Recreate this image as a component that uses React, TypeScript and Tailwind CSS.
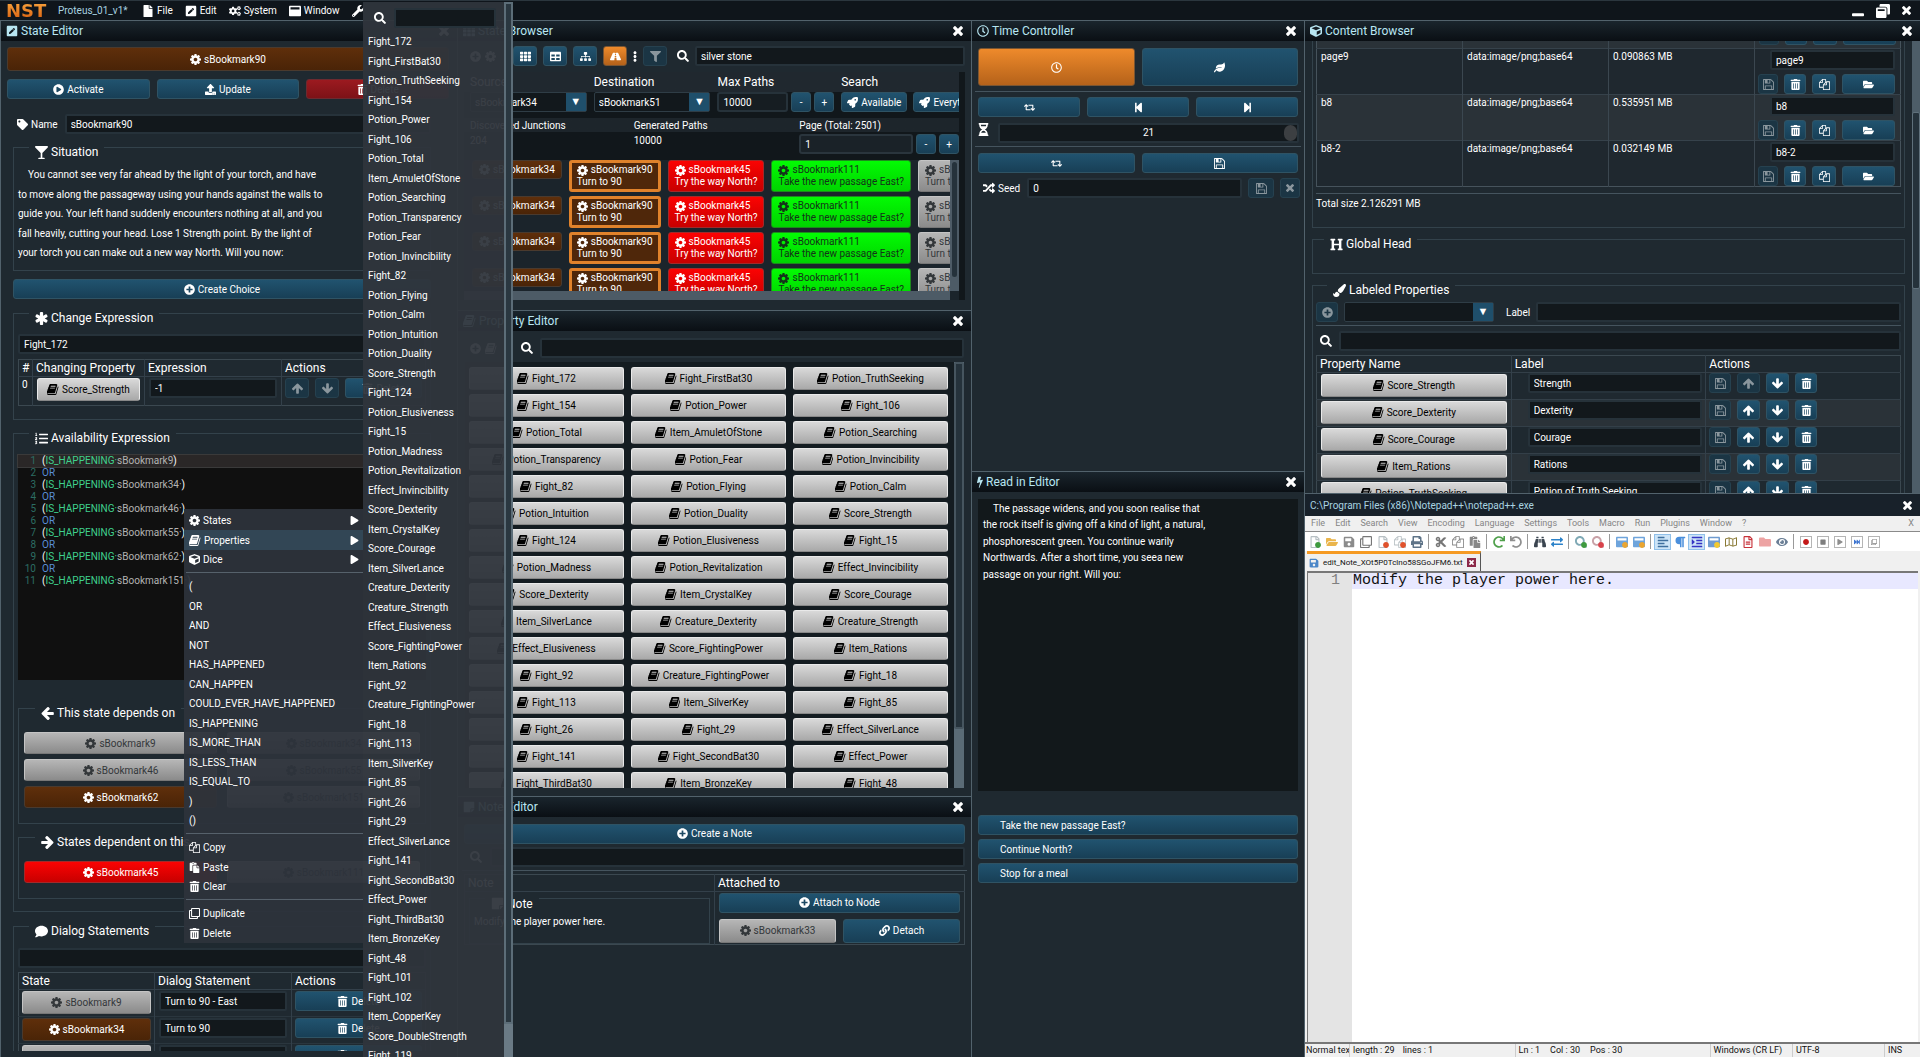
import type { ComponentType, ReactNode } from 'react'
import clsx from 'clsx'
import {
  FaAlignLeft,
  FaBinoculars,
  FaCircle,
  FaCogs,
  FaComment,
  FaCube,
  FaCut,
  FaEllipsisV,
  FaExchangeAlt,
  FaEye,
  FaFastForward,
  FaFile,
  FaFilter,
  FaFolder,
  FaFolderOpen,
  FaGlassMartini,
  FaHeading,
  FaHourglassHalf,
  FaIndent,
  FaLeaf,
  FaLink,
  FaListOl,
  FaPaintBrush,
  FaParagraph,
  FaPaste,
  FaPenSquare,
  FaPlay,
  FaPlayCircle,
  FaPlusCircle,
  FaPrint,
  FaRandom,
  FaRedo,
  FaRegClock,
  FaRegClone,
  FaRegFile,
  FaRegFileAlt,
  FaRegMap,
  FaRetweet,
  FaRoad,
  FaRocket,
  FaSave,
  FaSearch,
  FaSitemap,
  FaStepBackward,
  FaStepForward,
  FaStickyNote,
  FaStop,
  FaTable,
  FaTag,
  FaTh,
  FaTrashAlt,
  FaUndo,
  FaUpload,
  FaWindowMaximize,
  FaWindowMinimize,
  FaWindowRestore,
  FaWrench,
} from 'react-icons/fa'

type IconType = ComponentType<{ className?: string }>

function Glyph({ d, box = '128 128 1536 1536', className }: { d: string; box?: string; className?: string }) {
  return (
    <svg viewBox={box} className={className} height="1em" fill="currentColor" aria-hidden="true">
      <path d={d} />
    </svg>
  )
}

const Book: IconType = ({ className }) => (
  <Glyph
    className={className}
    box="64 128 1664 1536"
    d="M1639 478q40 57 18 129l-275 906q-19 64-76.5 107.5t-122.5 43.5h-923q-77 0-148.5-53.5t-99.5-131.5q-24-67-2-127 0-4 3-27t4-37q1-8-3-21.5t-3-19.5q2-11 8-21t16.5-23.5 16.5-23.5q23-38 45-91.5t30-91.5q3-10 .5-30t-.5-28q3-11 17-28t17-23q21-36 42-92t25-90q1-9-2.5-32t.5-28q4-13 22-30.5t22-22.5q19-26 42.5-84.5t27.5-96.5q1-8-3-25.5t-2-26.5q2-8 9-18t18-23 17-21q8-12 16.5-30.5t15-35 16-36 19.5-32 26.5-23.5 36-11.5 47.5 5.5l-1 3q38-9 51-9h761q74 0 114 56t18 130l-274 906q-36 119-71.5 153.5t-128.5 34.5h-869q-27 0-38 15-11 16-1 43 24 70 144 70h923q29 0 56-15.5t35-41.5l300-987q7-22 5-57 38 15 59 43zm-1064 2q-4 13 2 22.5t20 9.5h608q13 0 25.5-9.5t16.5-22.5l21-64q4-13-2-22.5t-20-9.5h-608q-13 0-25.5 9.5t-16.5 22.5zm-83 256q-4 13 2 22.5t20 9.5h608q13 0 25.5-9.5t16.5-22.5l21-64q4-13-2-22.5t-20-9.5h-608q-13 0-25.5 9.5t-16.5 22.5z"
  />
)

const Cog: IconType = ({ className }) => (
  <Glyph
    className={className}
    d="M1152 896q0-106-75-181t-181-75-181 75-75 181 75 181 181 75 181-75 75-181zm512-109v222q0 12-8 23t-20 13l-185 28q-19 54-39 91 35 50 107 138 10 12 10 25t-9 23q-27 37-99 108t-94 71q-12 0-26-9l-138-108q-44 23-91 38-16 136-29 186-7 28-36 28h-222q-14 0-24.5-8.5t-11.5-21.5l-28-184q-49-16-90-37l-141 107q-10 9-25 9-14 0-25-11-126-114-165-168-7-10-7-23 0-12 8-23 15-21 51-66.5t54-70.5q-27-50-41-99l-183-27q-13-2-21-12.5t-8-23.5v-222q0-12 8-23t19-13l186-28q14-46 39-92-40-57-107-138-10-12-10-24 0-10 9-23 26-36 98.5-107.5t94.5-71.5q13 0 26 10l138 107q44-23 91-38 16-136 29-186 7-28 36-28h222q14 0 24.5 8.5t11.5 21.5l28 184q49 16 90 37l142-107q9-9 24-9 13 0 25 10 129 119 165 170 7 8 7 22 0 12-8 23-15 21-51 66.5t-54 70.5q26 50 41 98l183 28q13 2 21 12.5t8 23.5z"
  />
)

const Files: IconType = ({ className }) => (
  <Glyph
    className={className}
    box="0 0 1792 1792"
    d="M1696 384q40 0 68 28t28 68v1216q0 40-28 68t-68 28h-960q-40 0-68-28t-28-68v-288h-544q-40 0-68-28t-28-68v-672q0-40 20-88t48-76l408-408q28-28 76-48t88-20h416q40 0 68 28t28 68v328q68-40 128-40h416zm-544 213l-299 299h299v-299zm-640-384l-299 299h299v-299zm196 647l316-316v-416h-384v416q0 40-28 68t-68 28h-416v640h512v-256q0-40 20-88t48-76zm956 804v-1152h-384v416q0 40-28 68t-68 28h-416v640h896z"
  />
)

const Floppy: IconType = ({ className }) => (
  <Glyph
    className={className}
    d="M512 1536h768v-384h-768v384zm896 0h128v-896q0-14-10-38.5t-20-34.5l-281-281q-10-10-34-20t-39-10v416q0 40-28 68t-68 28h-576q-40 0-68-28t-28-68v-416h-128v1280h128v-416q0-40 28-68t68-28h832q40 0 68 28t28 68v416zm-384-928v-320q0-13-9.5-22.5t-22.5-9.5h-192q-13 0-22.5 9.5t-9.5 22.5v320q0 13 9.5 22.5t22.5 9.5h192q13 0 22.5-9.5t9.5-22.5zm640 32v928q0 40-28 68t-68 28h-1344q-40 0-68-28t-28-68v-1344q0-40 28-68t68-28h928q40 0 88 20t76 48l280 280q28 28 48 76t20 88z"
  />
)

const Cross: IconType = ({ className }) => (
  <Glyph
    className={className}
    box="302 366 1188 1188"
    d="M1490 1322q0 40-28 68l-136 136q-28 28-68 28t-68-28l-294-294-294 294q-28 28-68 28t-68-28l-136-136q-28-28-28-68t28-68l294-294-294-294q-28-28-28-68t28-68l136-136q28-28 68-28t68 28l294 294 294-294q28-28 68-28t68 28l136 136q28 28 28 68t-28 68l-294 294 294 294q28 28 28 68z"
  />
)

const Asterisk: IconType = ({ className }) => (
  <Glyph
    className={className}
    d="M1546 1050q46 26 59.5 77.5t-12.5 97.5l-64 110q-26 46-77.5 59.5t-97.5-12.5l-266-153v307q0 52-38 90t-90 38h-128q-52 0-90-38t-38-90v-307l-266 153q-46 26-97.5 12.5t-77.5-59.5l-64-110q-26-46-12.5-97.5t59.5-77.5l266-154-266-154q-46-26-59.5-77.5t12.5-97.5l64-110q26-46 77.5-59.5t97.5 12.5l266 153v-307q0-52 38-90t90-38h128q52 0 90 38t38 90v307l266-153q46-26 97.5-12.5t77.5 59.5l64 110q26 46 12.5 97.5t-59.5 77.5l-266 154z"
  />
)

const Bolt: IconType = ({ className }) => (
  <Glyph
    className={className}
    box="448 0 896 1792"
    d="M1333 566q18 20 7 44l-540 1157q-13 25-42 25-4 0-14-2-17-4-25.5-19t-4.5-32l197-808-406 101q-4 1-12 1-18 0-31-11-18-15-13-39l201-825q4-14 16-23t28-9h328q19 0 32 12.5t13 29.5q0 8-5 18l-171 463 396-98q8-2 12-2 19 0 34 15z"
  />
)

const ArrowUp: IconType = ({ className }) => (
  <Glyph
    className={className}
    box="117 128 1558 1558"
    d="M1675 971q0 51-37 90l-75 75q-38 38-91 38-54 0-90-38l-294-293v704q0 52-37.5 84.5t-90.5 32.5h-128q-53 0-90.5-32.5t-37.5-84.5v-704l-294 293q-36 38-90 38t-90-38l-75-75q-38-38-38-90 0-53 38-91l651-651q35-37 90-37 54 0 91 37l651 651q37 39 37 91z"
  />
)

const ArrowDown: IconType = ({ className }) => <ArrowUp className={clsx('rotate-180', className)} />
const ArrowLeft: IconType = ({ className }) => <ArrowUp className={clsx('-rotate-90', className)} />
const ArrowRight: IconType = ({ className }) => <ArrowUp className={clsx('rotate-90', className)} />

const tones = {
  blue: 'border-[#2f5364] bg-linear-to-b from-[#21536f] to-[#183f56] text-white',
  faded: 'border-[#26414f] bg-[#1b3544] text-[#8a969d]',
  brown: 'border-[#4a3a2e] bg-linear-to-b from-[#5f2f0b] to-[#4a2407] text-white',
  red: 'border-[#a32a2a] bg-linear-to-b from-[#fb0303] to-[#c80000] text-white',
  crimson: 'border-[#6d2a30] bg-linear-to-b from-[#9c1a20] to-[#7d1217] text-white',
  green: 'border-[#1d8a1d] bg-linear-to-b from-[#03fb03] to-[#00d400] text-[#14331a]',
  orange: 'border-[#7a5532] bg-linear-to-b from-[#ee8a2b] to-[#b5621a] text-white',
  light: 'border-[#e9e9e9] border-b-[#888] bg-linear-to-b from-[#d9d9d9] to-[#a9a9a9] text-black',
  grey: 'border-[#c4c4c4] border-b-[#777] bg-linear-to-b from-[#b6b6b6] to-[#8b8b8b] text-[#33373a]',
}

type Tone = keyof typeof tones

function Btn({
  tone = 'blue',
  icon: Icon,
  label,
  className = 'h-5',
  children,
}: {
  tone?: Tone
  icon?: IconType
  label?: string
  className?: string
  children?: ReactNode
}) {
  return (
    <button
      type="button"
      aria-label={label}
      className={clsx(
        'flex min-w-0 items-center justify-center gap-[3px] overflow-hidden rounded-[3px] border whitespace-nowrap',
        tones[tone],
        className,
      )}
    >
      {Icon && <Icon className="shrink-0 text-[11px]" />}
      {children}
    </button>
  )
}

function Field({ label, value = '', className }: { label: string; value?: string; className?: string }) {
  return (
    <input
      aria-label={label}
      defaultValue={value}
      className={clsx('h-5 min-w-0 rounded-[2px] border-2 border-[#26323a] bg-[#12181c] px-1 outline-none', className)}
    />
  )
}

function Dropdown({ label, value = '', className }: { label: string; value?: string; className?: string }) {
  return (
    <span className={clsx('flex h-5 min-w-0 rounded-[2px] border border-[#2f3d46] bg-[#12181c]', className)}>
      <select aria-label={label} className="min-w-0 flex-1 appearance-none px-1 outline-none">
        <option>{value}</option>
      </select>
      <span aria-hidden="true" className="flex w-5 items-center justify-center bg-[#1f4f6b] text-[11px]">
        ▼
      </span>
    </span>
  )
}

function Group({
  title,
  icon: Icon,
  className,
  children,
}: {
  title: string
  icon: IconType
  className?: string
  children?: ReactNode
}) {
  return (
    <fieldset className={clsx('min-w-0 border border-[#33424b]', className)}>
      <legend className="ml-[11px] flex items-center gap-[3px] px-1.5 pt-2.5 text-[12px] leading-4">
        <Icon className="text-[13px]" />
        {title}
      </legend>
      {children}
    </fieldset>
  )
}

function Panel({
  title,
  icon: Icon,
  className,
  children,
}: {
  title: string
  icon: IconType
  className?: string
  children?: ReactNode
}) {
  return (
    <section className={clsx('flex min-h-0 min-w-0 flex-col overflow-hidden border-t border-l border-[#52626c] bg-[#1f2930]', className)}>
      <header className="flex h-5 shrink-0 items-center gap-[3px] bg-linear-to-b from-[#1a252d] to-[#0a0f14] px-[5px] text-[#b8e6f2]">
        <Icon className="text-[12px]" />
        <h2 className="flex-1 text-[12px]">{title}</h2>
        <button type="button" aria-label="Close" className="pr-[3px] text-white">
          <Cross className="text-[10px]" />
        </button>
      </header>
      {children}
    </section>
  )
}

const properties = [
  'Fight_172', 'Fight_FirstBat30', 'Potion_TruthSeeking', 'Fight_154', 'Potion_Power', 'Fight_106',
  'Potion_Total', 'Item_AmuletOfStone', 'Potion_Searching', 'Potion_Transparency', 'Potion_Fear',
  'Potion_Invincibility', 'Fight_82', 'Potion_Flying', 'Potion_Calm', 'Potion_Intuition', 'Potion_Duality',
  'Score_Strength', 'Fight_124', 'Potion_Elusiveness', 'Fight_15', 'Potion_Madness', 'Potion_Revitalization',
  'Effect_Invincibility', 'Score_Dexterity', 'Item_CrystalKey', 'Score_Courage', 'Item_SilverLance',
  'Creature_Dexterity', 'Creature_Strength', 'Effect_Elusiveness', 'Score_FightingPower', 'Item_Rations',
  'Fight_92', 'Creature_FightingPower', 'Fight_18', 'Fight_113', 'Item_SilverKey', 'Fight_85', 'Fight_26',
  'Fight_29', 'Effect_SilverLance', 'Fight_141', 'Fight_SecondBat30', 'Effect_Power', 'Fight_ThirdBat30',
  'Item_BronzeKey', 'Fight_48', 'Fight_101', 'Fight_102', 'Item_CopperKey', 'Score_DoubleStrength', 'Fight_119',
]

const situation = [
  'You cannot see very far ahead by the light of your torch, and have',
  'to move along the passageway using your hands against the walls to',
  'guide you. Your left hand suddenly encounters nothing at all, and you',
  'fall heavily, cutting your head. Lose 1 Strength point. By the light of',
  'your torch you can make out a new way North. Will you now:',
]

const expression = ['9', 'OR', '34', 'OR', '46', 'OR', '55', 'OR', '62', 'OR', '151']

function MenuBar() {
  const items: [string, IconType][] = [
    ['File', FaFile],
    ['Edit', FaPenSquare],
    ['System', FaCogs],
    ['Window', FaWindowMaximize],
  ]
  return (
    <header className="flex h-5 shrink-0 items-center border-t border-[#2b363e] bg-[#0f151b] px-1.5">
      <span className="w-[52px] bg-linear-to-b from-[#f7a03a] to-[#d9620f] bg-clip-text font-['DejaVu_Sans'] text-[18px] leading-4 font-bold text-transparent">
        NST
      </span>
      <span className="w-[84px] text-[#a9d3e0]">Proteus_01_v1*</span>
      <nav className="flex flex-1 items-center gap-3">
        {items.map(([name, Icon]) => (
          <button type="button" key={name} className="flex items-center gap-[3px]">
            <Icon className="text-[12px]" />
            {name}
          </button>
        ))}
        <button type="button" aria-label="Tools">
          <FaWrench className="text-[12px]" />
        </button>
      </nav>
      <div className="flex items-center gap-3 text-[12px]">
        <button type="button" aria-label="Minimize">
          <FaWindowMinimize />
        </button>
        <button type="button" aria-label="Restore">
          <FaWindowRestore className="text-[14px]" />
        </button>
        <button type="button" aria-label="Exit" className="pr-[3px]">
          <Cross className="text-[9px]" />
        </button>
      </div>
    </header>
  )
}

function StateEditor() {
  return (
    <Panel title="State Editor" icon={FaPenSquare} className="pb-1.5">
      <div className="min-h-0 flex-1 overflow-hidden pt-1.5 pr-2 pl-1.5">
        <Btn tone="brown" icon={Cog} className="h-6 w-full">
          sBookmark90
        </Btn>
        <div className="mt-2 grid grid-cols-3 gap-[7px]">
          <Btn icon={FaPlayCircle}>Activate</Btn>
          <Btn icon={FaUpload}>Update</Btn>
          <Btn tone="crimson" icon={FaTrashAlt}>
            Delete
          </Btn>
        </div>

        <div className="mt-[15px] pr-[18px] pl-1.5">
          <label className="flex items-center gap-[3px] pl-1">
            <FaTag className="text-[11px]" />
            Name
            <Field label="Name" value="sBookmark90" className="ml-1 flex-1" />
          </label>

          <Group title="Situation" icon={FaGlassMartini} className="h-[137px] px-1 pt-[5px]">
            {situation.map((line) => (
              <p key={line} className="whitespace-nowrap first-of-type:indent-2.5 odd:h-[19px] odd:leading-[19px] even:h-5 even:leading-5">
                {line}
              </p>
            ))}
          </Group>
          <Btn icon={FaPlusCircle} className="mt-2 mb-px h-5 w-full">
            Create Choice
          </Btn>

          <Group title="Change Expression" icon={Asterisk} className="px-1 pt-2 pb-[13px]">
            <Field label="Change expression" value="Fight_172" className="w-full" />
            <table className="mt-[5px] w-full table-fixed border border-[#3b4850] text-left">
              <thead className="text-[12px]">
                <tr className="h-[17px] border-b border-[#33404a]">
                  <th className="w-[14px] border-r border-[#33404a] pl-[3px] leading-4 font-normal">#</th>
                  <th className="w-28 border-r border-[#33404a] pl-[3px] leading-4 font-normal">Changing Property</th>
                  <th className="w-[137px] border-r border-[#33404a] pl-[3px] leading-4 font-normal">Expression</th>
                  <th className="pl-[3px] leading-4 font-normal">Actions</th>
                </tr>
              </thead>
              <tbody className="align-top">
                <tr className="h-[29px]">
                  <td className="border-r border-[#33404a] pl-[3px]">0</td>
                  <td className="border-r border-[#33404a] px-1 pt-px">
                    <Btn tone="light" icon={Book} className="h-[23px] w-full">
                      Score_Strength
                    </Btn>
                  </td>
                  <td className="border-r border-[#33404a] px-1 pt-px">
                    <Field label="Expression" value="-1" className="w-full" />
                  </td>
                  <td className="px-[3px] pt-px">
                    <div className="flex gap-1.5">
                      <Btn tone="faded" icon={ArrowUp} label="Move up" className="h-5 w-6 shrink-0" />
                      <Btn tone="faded" icon={ArrowDown} label="Move down" className="h-5 w-6 shrink-0" />
                      <Btn icon={FaTrashAlt} className="h-5 flex-1">
                        Delete
                      </Btn>
                    </div>
                  </td>
                </tr>
              </tbody>
            </table>
          </Group>

          <Group title="Availability Expression" icon={FaListOl} className="px-1 pt-2 pb-3">
            <ol className="h-[226px] bg-[#101010] pt-px">
              {expression.map((part, i) => (
                <li key={i} className="flex h-3 gap-1.5 leading-3 first:bg-[#2a2727] first:outline first:outline-[#3a3a3a]">
                  <span className="w-[18px] text-right text-[#2c6d63]">{i + 1}</span>
                  {part === 'OR' ? (
                    <span className="text-[#5a8fd6]">OR</span>
                  ) : (
                    <code className="font-['Roboto'] text-[#b3b3b3]">
                      <span className="text-white">(</span>
                      <span className="text-[#3fd18d]">IS_HAPPENING·</span>
                      sBookmark{part}
                      {part !== '9' && '·'}
                      <span className="text-white">)</span>
                    </code>
                  )}
                </li>
              ))}
            </ol>
            <Group title="This state depends on" icon={ArrowLeft} className="mt-[15px] px-[5px] pt-[11px] pb-[15px]">
              <div className="grid grid-cols-2 gap-x-2.5 gap-y-[5px]">
                <Btn tone="grey" icon={Cog} className="h-[22px]">sBookmark9</Btn>
                <Btn tone="grey" icon={Cog} className="h-[22px]">sBookmark34</Btn>
                <Btn tone="grey" icon={Cog} className="h-[22px]">sBookmark46</Btn>
                <Btn tone="grey" icon={Cog} className="h-[22px]">sBookmark55</Btn>
                <Btn tone="brown" icon={Cog} className="h-[22px]">sBookmark62</Btn>
                <Btn tone="grey" icon={Cog} className="h-[22px]">sBookmark151</Btn>
              </div>
            </Group>
            <Group title="States dependent on this" icon={ArrowRight} className="px-[5px] pt-[11px] pb-[15px]">
              <div className="grid grid-cols-2 gap-x-2.5">
                <Btn tone="red" icon={Cog} className="h-[22px]">sBookmark45</Btn>
                <Btn tone="grey" icon={Cog} className="h-[22px]">sBookmark111</Btn>
              </div>
            </Group>
          </Group>

          <Group title="Dialog Statements" icon={FaComment} className="mt-px px-1 pt-[9px]">
            <Field label="Filter dialog statements" className="w-full" />
            <table className="mt-1 w-full table-fixed border border-[#3b4850] text-left">
              <thead className="text-[12px]">
                <tr className="h-[17px] border-b border-[#33404a]">
                  <th className="w-[136px] border-r border-[#33404a] pl-[3px] leading-4 font-normal">State</th>
                  <th className="w-[137px] border-r border-[#33404a] pl-[3px] leading-4 font-normal">Dialog Statement</th>
                  <th className="pl-[3px] leading-4 font-normal">Actions</th>
                </tr>
              </thead>
              <tbody className="align-top">
                {[
                  ['sBookmark9', 'Turn to 90 - East'],
                  ['sBookmark34', 'Turn to 90'],
                  ['sBookmark46', ''],
                ].map(([state, text], i) => (
                  <tr key={state} className="h-[27px] border-b border-[#2a363e]">
                    <td className="border-r border-[#33404a] px-[3px] pt-px">
                      <Btn tone={i === 1 ? 'brown' : 'grey'} icon={Cog} className="h-[23px] w-full">
                        {state}
                      </Btn>
                    </td>
                    <td className="border-r border-[#33404a] px-1 pt-px">
                      <Field label={`Statement for ${state}`} value={text} className="w-full" />
                    </td>
                    <td className="px-[3px] pt-px">
                      <Btn icon={FaTrashAlt} className="h-5 w-full">
                        Delete
                      </Btn>
                    </td>
                  </tr>
                ))}
              </tbody>
            </table>
          </Group>
        </div>
      </div>
    </Panel>
  )
}

function StateBrowser() {
  return (
    <Panel title="State Browser" icon={FaTh} className="flex-[290]">
      <div className="flex min-h-0 flex-1 flex-col px-1.5 pt-[5px] pb-2.5">
        <div className="flex items-center gap-1.5">
          <span className="flex w-[43px] gap-1 pl-1.5 text-[11px]">
            <FaPlusCircle />
            <Cog />
          </span>
          <Btn icon={FaTh} label="Grid" className="h-5 w-6" />
          <Btn icon={FaTable} label="Table" className="h-5 w-6" />
          <Btn icon={FaSitemap} label="Tree" className="h-5 w-6" />
          <Btn tone="orange" icon={FaRoad} label="Paths" className="h-5 w-6" />
          <FaEllipsisV className="w-1 text-[11px]" />
          <Btn tone="faded" icon={FaFilter} label="Filter" className="h-5 w-6" />
          <FaSearch className="ml-1 text-[12px]" />
          <Field label="Search states" value="silver stone" className="flex-1" />
        </div>

        <div className="mt-1.5 flex min-h-0 flex-1 flex-col overflow-hidden bg-[#11171b] pr-1.5">
          <div className="grid h-10 shrink-0 grid-cols-[124fr_124fr_124fr_118fr] bg-linear-to-b from-[#20282f] from-50% to-[#11171b] to-50% pl-1.5 text-[12px]">
            <label className="min-w-0">
              <span className="block h-5 leading-5">Source</span>
              <Dropdown label="Source" value="sBookmark34" className="mr-[7px] text-[10px]" />
            </label>
            <label className="min-w-0">
              <span className="block h-5 leading-5">Destination</span>
              <Dropdown label="Destination" value="sBookmark51" className="mr-[7px] text-[10px]" />
            </label>
            <div className="min-w-0">
              <label htmlFor="max-paths" className="block h-5 leading-5">
                Max Paths
              </label>
              <div className="flex gap-[3px] pr-[7px] text-[10px]">
                <input id="max-paths" defaultValue="10000" className="h-5 min-w-0 flex-1 rounded-[3px] border-2 border-[#26323a] bg-[#161d22] px-1" />
                <Btn className="h-5 w-5">-</Btn>
                <Btn className="h-5 w-5">+</Btn>
              </div>
            </div>
            <div className="min-w-0 overflow-hidden">
              <span className="block h-5 leading-5">Search</span>
              <div className="flex gap-1.5 text-[10px]">
                <Btn icon={FaRocket} className="h-5 shrink-0 px-[5px]">Available</Btn>
                <Btn icon={FaRocket} className="h-5 shrink-0 px-[5px]">Everything</Btn>
              </div>
            </div>
          </div>

          <div className="mt-1.5 grid h-10 shrink-0 grid-cols-[164fr_166fr_160fr] bg-linear-to-b from-[#1d252b] from-35% to-[#11171b] to-35% pl-1.5">
            <div className="min-w-0">
              <p className="h-[15px] leading-[15px]">Discovered Junctions</p>
              <p className="leading-4">204</p>
            </div>
            <div className="min-w-0">
              <p className="h-[15px] leading-[15px]">Generated Paths</p>
              <p className="leading-4">10000</p>
            </div>
            <div className="min-w-0">
              <label htmlFor="page" className="block h-4 leading-[15px]">
                Page (Total: 2501)
              </label>
              <div className="flex gap-[3px]">
                <input id="page" defaultValue="1" className="h-5 min-w-0 flex-1 rounded-[3px] border-2 border-[#2a353d] bg-[#1a2228] px-1" />
                <Btn className="h-5 w-5">-</Btn>
                <Btn className="h-5 w-5">+</Btn>
              </div>
            </div>
          </div>

          <div className="mt-0.5 flex min-h-0 flex-1 bg-[#1b242b]">
            <div className="flex min-w-0 flex-1 flex-col">
              <div className="min-h-0 flex-1 space-y-1 overflow-hidden pl-2">
                {[0, 1, 2, 3].map((i) => (
                  <div key={i} className="flex h-8 items-start gap-[7px]">
                    <Btn tone="brown" icon={Cog} className="h-[19px] shrink-0 px-1.5">
                      sBookmark34
                    </Btn>
                    <Chip name="sBookmark90" text="Turn to 90" className="border-[3px] border-[#e0822b] bg-[#4f270a] px-[5px] text-white" />
                    <Chip name="sBookmark45" text="Try the way North?" className={clsx('border px-1.5', tones.red)} />
                    <Chip name="sBookmark111" text="Take the new passage East?" className={clsx('border px-1.5', tones.green)} />
                    <Chip name="sBookmark71" text="Turn to 71" className={clsx('border px-1.5', tones.grey)} />
                  </div>
                ))}
              </div>
              <div className="h-[9px] shrink-0 bg-[#4d5b66]" />
            </div>
            <div className="w-[9px] pb-[9px]">
              <div className="h-full bg-[#4d5b66] pb-3">
                <div className="h-full rounded-full border-2 border-[#4d5b66] bg-[#25323b]" />
              </div>
            </div>
          </div>
        </div>
      </div>
    </Panel>
  )
}

function Chip({ name, text, className }: { name: string; text: string; className: string }) {
  return (
    <button type="button" className={clsx('h-8 shrink-0 rounded-[3px] text-left leading-3 whitespace-nowrap', className)}>
      <span className="flex items-center gap-[3px]">
        <Cog className="text-[11px]" />
        {name}
      </span>
      {text}
    </button>
  )
}

function PropertyEditor() {
  return (
    <Panel title="Property Editor" icon={Book} className="flex-[486]">
      <div className="flex items-center gap-[7px] pt-[7px] pr-[7px] pl-3">
        <span className="flex w-11 gap-1 text-[11px]">
          <FaPlusCircle />
          <Book />
        </span>
        <FaSearch className="text-[12px]" />
        <Field label="Search properties" className="flex-1" />
      </div>
      <div className="mx-[7px] mt-1 mb-2 flex min-h-0 flex-1 gap-1.5 bg-[#141c21]">
        <div className="grid min-h-0 flex-1 auto-rows-[23px] grid-cols-3 content-start gap-x-[7px] gap-y-1 overflow-hidden pt-[5px] pl-1">
          {properties.slice(0, 48).map((name) => (
            <Btn key={name} tone="light" icon={Book} className="h-[23px]">
              {name}
            </Btn>
          ))}
        </div>
        <div className="w-2.5 bg-[#5a6b76] pb-[59px]">
          <div className="h-full rounded-[2px] border-2 border-[#46555f] bg-[#25323b]" />
        </div>
      </div>
    </Panel>
  )
}

function NoteEditor() {
  return (
    <Panel title="Note Editor" icon={FaStickyNote} className="flex-[261]">
      <div className="px-1.5 pt-[7px]">
        <Btn icon={FaPlusCircle} className="h-5 w-full">
          Create a Note
        </Btn>
        <div className="mt-[3px] flex items-center gap-2 pl-1.5">
          <FaSearch className="text-[12px]" />
          <Field label="Search notes" className="flex-1" />
        </div>
      </div>
      <hr className="mx-1 mt-[3px] border-[#45545e]" />
      <div className="mt-[3px] px-1.5">
        <table className="w-full table-fixed border border-[#3b4850] text-left">
          <thead className="text-[12px]">
            <tr className="h-[17px] border-b border-[#33404a]">
              <th className="border-r border-[#33404a] pl-[3px] leading-4 font-normal">Note</th>
              <th className="pl-[3px] leading-4 font-normal">Attached to</th>
            </tr>
          </thead>
          <tbody className="align-top">
            <tr>
              <td className="border-r border-[#33404a] px-1">
                <Group title="Note" icon={FaStickyNote} className="-mt-1.5 h-[58px] px-1">
                  <p className="leading-5">Modify the player power here.</p>
                </Group>
              </td>
              <td className="px-1 pt-px">
                <Btn icon={FaPlusCircle} className="h-5 w-full">
                  Attach to Node
                </Btn>
                <div className="mt-1.5 grid grid-cols-2 gap-[7px]">
                  <Btn tone="grey" icon={Cog} className="h-6">sBookmark33</Btn>
                  <Btn icon={FaLink} className="h-6">Detach</Btn>
                </div>
              </td>
            </tr>
          </tbody>
        </table>
      </div>
    </Panel>
  )
}

function TimeController() {
  return (
    <Panel title="Time Controller" icon={FaRegClock} className="flex-[451]">
      <div className="grid grid-cols-2 gap-[7px] px-1.5 pt-[7px]">
        <Btn tone="orange" icon={FaRegClock} label="Clock" className="h-[38px]" />
        <Btn icon={FaLeaf} label="Leaf" className="h-[38px]" />
      </div>
      <hr className="mx-[3px] my-[5px] border-[#45545e]" />
      <div className="grid grid-cols-3 gap-[7px] px-1.5">
        <Btn icon={FaRetweet} label="Reset" />
        <Btn icon={FaStepBackward} label="Previous step" />
        <Btn icon={FaStepForward} label="Next step" />
      </div>
      <label className="mt-1.5 flex gap-2 px-[5px]">
        <FaHourglassHalf className="text-[13px]" />
        <span className="relative flex h-5 flex-1 items-center rounded-[2px] border-2 border-[#26323a] bg-[#12181c]">
          <input
            type="range"
            aria-label="Step"
            min="0"
            max="21"
            defaultValue="21"
            className="w-full appearance-none bg-transparent [&::-webkit-slider-thumb]:h-4 [&::-webkit-slider-thumb]:w-[13px] [&::-webkit-slider-thumb]:appearance-none [&::-webkit-slider-thumb]:rounded-full [&::-webkit-slider-thumb]:bg-[#3c3f42]"
          />
          <span className="absolute inset-0 text-center leading-4">21</span>
        </span>
      </label>
      <hr className="mx-[3px] mt-[3px] mb-1.5 border-[#45545e]" />
      <div className="grid grid-cols-2 gap-[7px] px-1.5">
        <Btn icon={FaRetweet} label="Shuffle again" />
        <Btn icon={Floppy} label="Save" />
      </div>
      <div className="mt-[5px] flex items-center gap-1.5 pr-1 pl-[11px]">
        <label className="flex flex-1 items-center gap-[3px]">
          <FaRandom className="text-[12px]" />
          Seed
          <Field label="Seed" value="0" className="ml-1 flex-1" />
        </label>
        <Btn tone="faded" icon={Floppy} label="Save seed" className="h-5 w-[26px]" />
        <Btn tone="faded" label="Clear seed" className="h-5 w-5">
          <Cross className="text-[8px]" />
        </Btn>
      </div>
    </Panel>
  )
}

function ReadInEditor() {
  const lines = [
    'The passage widens, and you soon realise that',
    'the rock itself is giving off a kind of light, a natural,',
    'phosphorescent green. You continue warily',
    'Northwards. After a short time, you seea new',
    'passage on your right. Will you:',
  ]
  return (
    <Panel title="Read in Editor" icon={Bolt} className="flex-[586]">
      <div className="mx-1.5 mt-[7px] h-[292px] bg-[#12181b] px-[5px] pt-px">
        {lines.map((line) => (
          <p key={line} className="first:indent-2.5 odd:h-[17px] odd:leading-[17px] even:h-4 even:leading-4">
            {line}
          </p>
        ))}
      </div>
      <div className="mx-1.5 mt-6 space-y-1">
        {['Take the new passage East?', 'Continue North?', 'Stop for a meal'].map((choice) => (
          <button key={choice} type="button" className={clsx('block h-5 w-full rounded-[3px] border px-[21px] text-left', tones.blue)}>
            {choice}
          </button>
        ))}
      </div>
    </Panel>
  )
}

function FileActions() {
  return (
    <div className="flex gap-1.5">
      <Btn tone="faded" icon={Floppy} label="Save" className="h-5 w-5" />
      <Btn icon={FaTrashAlt} label="Delete" className="h-5 w-[22px]" />
      <Btn icon={Files} label="Copy" className="h-5 w-6" />
      <Btn icon={FaFolderOpen} label="Open" className="h-5 flex-1" />
    </div>
  )
}

function ContentBrowser() {
  const files = [
    ['page9', '0.090863 MB'],
    ['b8', '0.535951 MB'],
    ['b8-2', '0.032149 MB'],
  ]
  const labeled = [
    ['Score_Strength', 'Strength'],
    ['Score_Dexterity', 'Dexterity'],
    ['Score_Courage', 'Courage'],
    ['Item_Rations', 'Rations'],
    ['Potion_TruthSeeking', 'Potion of Truth Seeking'],
  ]
  return (
    <Panel title="Content Browser" icon={FaCube} className="flex-[473]">
      <div className="flex min-h-0 flex-1">
        <div className="min-w-0 flex-1 overflow-hidden pr-[7px] pl-[7px]">
          <div className="h-[187px] border border-t-0 border-[#33424b] px-[3px]">
            <table className="w-full table-fixed border-x border-b border-[#46535c]">
              <tbody>
                <tr className="bg-[#2a3238]">
                  <td className="w-1/4 border-r border-[#3b4750]" />
                  <td className="w-1/4 border-r border-[#3b4750]" />
                  <td className="w-1/4 border-r border-[#3b4750]" />
                  <td className="px-1">
                    <div className="flex h-[7px] items-end overflow-hidden pb-[3px]">
                      <div className="w-full">
                        <FileActions />
                      </div>
                    </div>
                  </td>
                </tr>
                {files.map(([name, size]) => (
                  <tr key={name} className="h-[46px] border-t border-[#36424b] align-top even:bg-[#1f282f] odd:bg-[#2a3238]">
                    <td className="border-r border-[#3b4750] pl-1">{name}</td>
                    <td className="border-r border-[#3b4750] pl-1">data:image/png;base64</td>
                    <td className="border-r border-[#3b4750] pl-1">{size}</td>
                    <td className="pt-px pr-[5px] pl-[3px]">
                      <Field label={`Name of ${name}`} value={name} className="mb-1 ml-3 block w-[calc(100%-12px)]" />
                      <FileActions />
                    </td>
                  </tr>
                ))}
              </tbody>
            </table>
            <hr className="mt-1.5 border-[#45545e]" />
            <p className="mt-0.5 leading-4">Total size 2.126291 MB</p>
          </div>

          <Group title="Global Head" icon={FaHeading} className="mt-[-2px] h-12" />
          <Group title="Labeled Properties" icon={FaPaintBrush} className="mt-[-2px] px-[3px] pt-1">
            <div className="flex items-center gap-1.5">
              <Btn tone="faded" icon={FaPlusCircle} label="Add label" className="h-5 w-[22px]" />
              <Dropdown label="Property" className="w-[150px]" />
              <label className="flex flex-1 items-center gap-1.5 pl-1.5">
                Label
                <Field label="Label" className="flex-1" />
              </label>
            </div>
            <hr className="mt-[3px] mb-[5px] border-[#45545e]" />
            <div className="flex items-center gap-[7px] pl-1">
              <FaSearch className="text-[12px]" />
              <Field label="Search labels" className="flex-1" />
            </div>
            <table className="mt-1 w-full table-fixed border border-[#3b4850] text-left">
              <thead className="text-[12px]">
                <tr className="h-4">
                  <th className="w-1/3 border-r border-[#33404a] pl-[3px] leading-4 font-normal">Property Name</th>
                  <th className="w-1/3 border-r border-[#33404a] pl-[3px] leading-4 font-normal">Label</th>
                  <th className="pl-[3px] leading-4 font-normal">Actions</th>
                </tr>
              </thead>
              <tbody className="align-top">
                {labeled.map(([name, label], i) => (
                  <tr key={name} className="h-[27px] border-t border-[#333f48] even:bg-[#2a3238]">
                    <td className="border-r border-[#33404a] px-1 pt-px">
                      <Btn tone="light" icon={Book} className="h-[23px] w-full">
                        {name}
                      </Btn>
                    </td>
                    <td className="border-r border-[#33404a] pr-[3px] pl-4">
                      <Field label={`Label of ${name}`} value={label} className="w-full" />
                    </td>
                    <td className="pl-[3px]">
                      <div className="flex gap-1.5">
                        <Btn tone="faded" icon={Floppy} label="Save" className="h-5 w-[22px]" />
                        <Btn tone={i === 0 ? 'faded' : 'blue'} icon={ArrowUp} label="Move up" className="h-5 w-[23px]" />
                        <Btn icon={ArrowDown} label="Move down" className="h-5 w-[23px]" />
                        <Btn icon={FaTrashAlt} label="Delete" className="h-5 w-[22px]" />
                      </div>
                    </td>
                  </tr>
                ))}
              </tbody>
            </table>
          </Group>
        </div>
        <div className="w-2 bg-[#4d5d68] pt-[71px]">
          <div className="h-[177px] rounded-[2px] border border-[#5f707b] bg-[#25323b]" />
        </div>
      </div>
    </Panel>
  )
}

type Tool = { icon: IconType; color: string; dot?: string; on?: boolean }

const toolbar: Tool[][] = [
  [
    { icon: FaRegFile, color: 'text-[#b8c0c4]', dot: 'text-[#3f9a3f]' },
    { icon: FaFolderOpen, color: 'text-[#eab54c]' },
    { icon: FaSave, color: 'text-[#8b8b8b]' },
    { icon: FaRegClone, color: 'text-[#777]' },
    { icon: FaRegFile, color: 'text-[#b8c0c4]', dot: 'text-[#e0522c]' },
    { icon: Files, color: 'text-[#b8c0c4]', dot: 'text-[#e0522c]' },
    { icon: FaPrint, color: 'text-[#5f7488]' },
  ],
  [
    { icon: FaCut, color: 'text-[#777]' },
    { icon: Files, color: 'text-[#888]' },
    { icon: FaPaste, color: 'text-[#888]' },
  ],
  [
    { icon: FaRedo, color: 'text-[#4fa04b]' },
    { icon: FaUndo, color: 'text-[#8f8f8f]' },
  ],
  [
    { icon: FaBinoculars, color: 'text-[#3b4550]' },
    { icon: FaExchangeAlt, color: 'text-[#2c82c9]' },
  ],
  [
    { icon: FaSearch, color: 'text-[#7fa9b5]', dot: 'text-[#3f9a3f]' },
    { icon: FaSearch, color: 'text-[#c9a2a8]', dot: 'text-[#d8434b]' },
  ],
  [
    { icon: FaWindowMaximize, color: 'text-[#6ea4dc]', dot: 'text-[#eaa531]' },
    { icon: FaWindowMaximize, color: 'text-[#6ea4dc]', dot: 'text-[#eaa531]' },
  ],
  [
    { icon: FaAlignLeft, color: 'text-[#3f6f9e]', on: true },
    { icon: FaParagraph, color: 'text-[#4a8fdc]' },
    { icon: FaIndent, color: 'text-[#3434c4]', on: true },
    { icon: FaWindowMaximize, color: 'text-[#6f9bd0]', dot: 'text-[#f2c92f]' },
    { icon: FaRegMap, color: 'text-[#8a7a36]' },
    { icon: FaRegFileAlt, color: 'text-[#c8323a]' },
    { icon: FaFolder, color: 'text-[#eda3a3]' },
    { icon: FaEye, color: 'text-[#6b7f96]' },
  ],
  [
    { icon: FaCircle, color: 'text-[#c41818]' },
    { icon: FaStop, color: 'text-[#7e7e7e]' },
    { icon: FaPlay, color: 'text-[#8e8e8e]' },
    { icon: FaFastForward, color: 'text-[#3c74d0]' },
    { icon: FaRegClone, color: 'text-[#808080]' },
  ],
]

function Notepad() {
  const menus = ['File', 'Edit', 'Search', 'View', 'Encoding', 'Language', 'Settings', 'Tools', 'Macro', 'Run', 'Plugins', 'Window', '?']
  return (
    <section className="flex min-h-0 flex-[564] flex-col border-t border-l border-[#52626c] bg-[#f0f0f0] text-[9px] text-[#111]">
      <header className="flex h-[22px] shrink-0 items-center bg-[#18212a] pr-2 pl-[5px] text-[10px] text-[#a9d3e0]">
        <h2 className="flex-1">C:\Program Files (x86)\Notepad++\notepad++.exe</h2>
        <button type="button" aria-label="Close" className="text-white">
          <Cross className="text-[9px]" />
        </button>
      </header>
      <nav className="flex h-[15px] shrink-0 items-center gap-2.5 px-1.5 text-[#858585]">
        {menus.map((m) => (
          <button type="button" key={m}>
            {m}
          </button>
        ))}
        <button type="button" className="ml-auto">
          X
        </button>
      </nav>
      <div className="flex h-5 shrink-0 items-center border-t border-[#8a8a8a] bg-white pl-px">
        {toolbar.map((group, g) => (
          <div key={g} className="flex items-center">
            {g > 0 && <span className="mx-[3px] h-[15px] w-px bg-[#9a9a9a]" />}
            {group.map(({ icon: Icon, color, dot, on }, i) => (
              <span
                key={i}
                className={clsx(
                  'relative flex h-4 w-[17px] items-center justify-center',
                  on && 'bg-[#cde4f7] ring-1 ring-[#90c0ea] ring-inset',
                  g === 7 && 'scale-100',
                )}
              >
                <Icon className={clsx(g === 7 ? 'border border-[#b5b5b5] p-0.5 text-[12px]' : 'text-[12px]', color)} />
                {dot && <FaCircle className={clsx('absolute right-0.5 bottom-0.5 text-[6px]', dot)} />}
              </span>
            ))}
          </div>
        ))}
      </div>
      <div className="flex h-5 shrink-0 items-end pl-0.5">
        <div className="flex h-5 items-center gap-1 border-t-[3px] border-r border-t-[#f59a23] border-r-[#555] pr-1 pl-0.5">
          <FaSave className="text-[10px] text-[#4a86c8]" />
          <span className="text-[8px] whitespace-nowrap">edit_Note_XOt5P0Tclno58SGoJFM6.txt</span>
          <button type="button" aria-label="Close tab" className="bg-[#8c2a49] p-0.5 text-white">
            <Cross className="text-[5px]" />
          </button>
        </div>
      </div>
      <div className="mx-0.5 flex min-h-0 flex-1 border-t-2 border-l border-[#777] bg-white font-['Liberation_Mono'] text-[15px] leading-4">
        <div className="w-11 bg-[#e4e4e4] pr-3 text-right text-[#808080]">1</div>
        <div className="flex-1">
          <p className="bg-[#e8e8ff] pl-px">Modify the player power here.</p>
        </div>
      </div>
      <footer className="flex h-[15px] shrink-0 items-center border-t-2 border-[#777] whitespace-nowrap">
        <span className="w-[45px] overflow-hidden border-r border-[#ccc] pl-px">Normal text file</span>
        <span className="flex flex-[165] gap-2 border-r border-[#ccc] pl-[3px]">
          <span>length : 29</span>
          <span>lines : 1</span>
        </span>
        <span className="flex flex-[195] gap-2.5 border-r border-[#ccc] pl-[3px]">
          <span>Ln : 1</span>
          <span>Col : 30</span>
          <span>Pos : 30</span>
        </span>
        <span className="flex-[80] border-r border-[#ccc] pl-[3px]">Windows (CR LF)</span>
        <span className="flex-[90] border-r border-[#ccc] pl-[3px]">UTF-8</span>
        <span className="w-[35px] pl-[3px]">INS</span>
      </footer>
    </section>
  )
}

const menuGroups: { name: string; icon?: IconType; sub?: boolean }[][] = [
  [
    { name: 'States', icon: Cog, sub: true },
    { name: 'Properties', icon: Book, sub: true },
    { name: 'Dice', icon: FaCube, sub: true },
  ],
  [
    '(', 'OR', 'AND', 'NOT', 'HAS_HAPPENED', 'CAN_HAPPEN', 'COULD_EVER_HAVE_HAPPENED', 'IS_HAPPENING',
    'IS_MORE_THAN', 'IS_LESS_THAN', 'IS_EQUAL_TO', ')', '()',
  ].map((name) => ({ name })),
  [
    { name: 'Copy', icon: Files },
    { name: 'Paste', icon: FaPaste },
    { name: 'Clear', icon: FaTrashAlt },
  ],
  [
    { name: 'Duplicate', icon: FaRegClone },
    { name: 'Delete', icon: FaTrashAlt },
  ],
]

function ContextMenu() {
  return (
    <div className="absolute top-[509px] left-[184px] w-[179px] bg-[#2d333b]/95 pt-0.5">
      {menuGroups.map((group, g) => (
        <ul key={g} className={clsx(g > 0 && 'mt-[3px] ml-0.5 border-t border-[#56616b] pt-1')}>
          {group.map(({ name, icon: Icon, sub }) => (
            <li key={name} className="odd:h-[19px] even:h-5">
              <button
                type="button"
                className={clsx('flex h-full w-full items-center gap-[3px] pr-1', g > 0 ? 'pl-[3px]' : 'pl-[5px]', name === 'Properties' && 'bg-[#324655]')}
              >
                {Icon && <Icon className="text-[11px]" />}
                <span className="flex-1 text-left">{name}</span>
                {sub && <FaPlay className="text-[9px]" />}
              </button>
            </li>
          ))}
        </ul>
      ))}
    </div>
  )
}

function PropertyMenu() {
  return (
    <div className="absolute top-0.5 bottom-0 left-[363px] flex w-[150px] bg-[#2f353c]/95">
      <div className="flex min-w-0 flex-1 flex-col">
        <label className="flex h-[30px] shrink-0 items-center gap-2 pt-1 pr-2 pb-0.5 pl-[11px]">
          <FaSearch className="text-[12px]" />
          <Field label="Find a property" className="flex-1" />
        </label>
        <ul className="min-h-0 flex-1 overflow-hidden">
          {properties.map((name) => (
            <li key={name} className="odd:h-[19px] even:h-5">
              <button type="button" className="block h-full pl-[5px] text-left">
                {name}
              </button>
            </li>
          ))}
        </ul>
      </div>
      <div className="w-[9px] bg-[#6a7a85] pb-[33px]">
        <div className="h-full border-2 border-[#5c6d78] bg-[#2a3740]" />
      </div>
    </div>
  )
}

export default function App() {
  return (
    <div className="relative flex h-screen flex-col overflow-hidden bg-[#1f2930] font-['Roboto',sans-serif] text-[10px] text-white">
      <MenuBar />
      <main className="grid min-h-0 flex-1 grid-cols-[457fr_514fr_333fr_616fr] grid-rows-1">
        <StateEditor />
        <div className="flex min-h-0 min-w-0 flex-col">
          <StateBrowser />
          <PropertyEditor />
          <NoteEditor />
        </div>
        <div className="flex min-h-0 min-w-0 flex-col">
          <TimeController />
          <ReadInEditor />
        </div>
        <div className="flex min-h-0 min-w-0 flex-col">
          <ContentBrowser />
          <Notepad />
        </div>
      </main>
      <ContextMenu />
      <PropertyMenu />
    </div>
  )
}
